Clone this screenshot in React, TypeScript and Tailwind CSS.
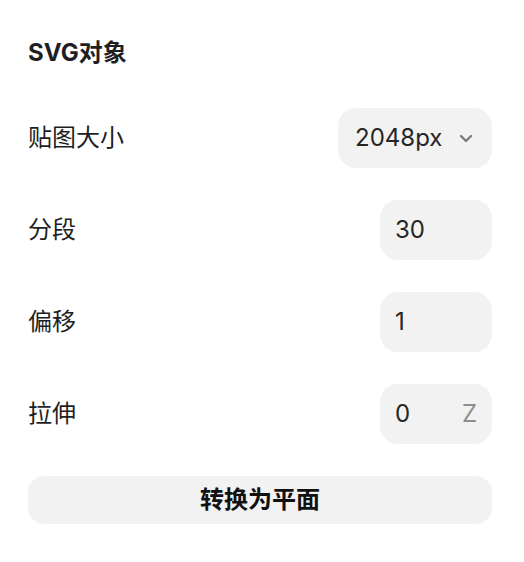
import React from "react";

const font = { fontFamily: 'Inter, "Noto Sans CJK SC", sans-serif' };

function Row({ label, children }: { label: string; children: React.ReactNode }) {
    return (
        <div className="flex h-[60px] items-center justify-between">
            <span className="text-[24px] leading-none text-[#1f1f1f]">{label}</span>
            {children}
        </div>
    );
}

function NumberBox({ value, suffix }: { value: string; suffix?: string }) {
    return (
        <div className="flex h-[60px] w-[112px] items-center justify-between rounded-[18px] bg-[#f2f2f2] pl-[15px] pr-[15px]">
            <span className="text-[24px] text-[#262626]">{value}</span>
            {suffix && <span className="text-[24px] text-[#8c8c8c]">{suffix}</span>}
        </div>
    );
}

export default function App() {
    return (
        <div className="min-h-screen bg-white pl-[28px] pr-[32px] pt-[38px]" style={font}>
            <h2 className="mb-[40px] flex h-[30px] items-center text-[24px] font-bold text-[#1f1f1f]">
                SVG对象
            </h2>

            <div className="flex flex-col gap-[32px]">
                <Row label="贴图大小">
                    <div className="flex h-[60px] w-[154px] items-center justify-between rounded-[18px] bg-[#f2f2f2] pl-[17px] pr-[19px]">
                        <span className="text-[24px] text-[#262626]">2048px</span>
                        <svg width="14" height="9" viewBox="0 0 14 9" fill="none">
                            <path d="M2 2l5 5 5-5" stroke="#7a7a7a" strokeWidth="2.4" strokeLinecap="round" strokeLinejoin="round" />
                        </svg>
                    </div>
                </Row>
                <Row label="分段">
                    <NumberBox value="30" />
                </Row>
                <Row label="偏移">
                    <NumberBox value="1" />
                </Row>
                <Row label="拉伸">
                    <NumberBox value="0" suffix="Z" />
                </Row>
                <button className="flex h-[48px] w-full items-center justify-center rounded-[16px] bg-[#f2f2f2] text-[24px] font-bold text-[#111]">
                    转换为平面
                </button>
            </div>
        </div>
    );
}
